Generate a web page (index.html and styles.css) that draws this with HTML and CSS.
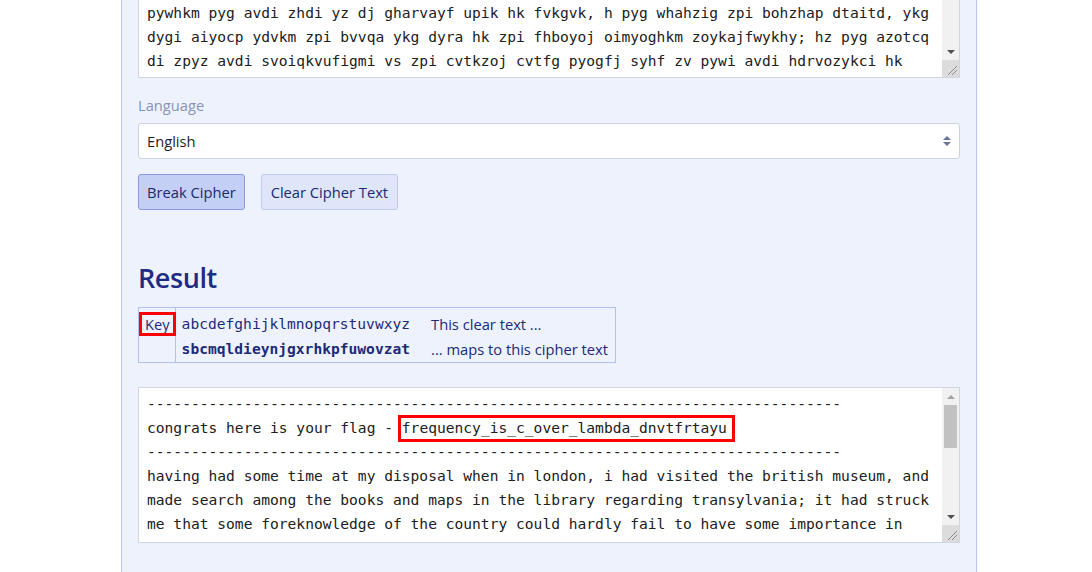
FILE: index.html
```html
<!DOCTYPE html>
<html lang="en">
<head>
<meta charset="utf-8">
<title>Substitution Cipher Solver</title>
<link rel="stylesheet" href="styles.css">
</head>
<body>
<main class="panel">
  <div class="field">
    <div class="textbox textbox-top">
      <div class="textbox-text">
        <div class="line">pywhkm pyg avdi zhdi yz dj gharvayf upik hk fvkgvk, h pyg whahzig zpi bohzhap dtaitd, ykg</div>
        <div class="line">dygi aiyocp ydvkm zpi bvvqa ykg dyra hk zpi fhboyoj oimyoghkm zoykajfwykhy; hz pyg azotcq</div>
        <div class="line">di zpyz avdi svoiqkvufigmi vs zpi cvtkzoj cvtfg pyogfj syhf zv pywi avdi hdrvozykci hk</div>
      </div>
      <div class="scrollbar">
        <div class="sb-btn"><svg width="8" height="4" viewBox="0 0 8 4"><path d="M0 4L4 0L8 4Z" class="arrow-off"/></svg></div>
        <div class="sb-track"><div class="sb-thumb sb-thumb-top"></div></div>
        <div class="sb-btn"><svg width="8" height="4" viewBox="0 0 8 4"><path d="M0 0H8L4 4Z" class="arrow-on"/></svg></div>
        <div class="sb-grip"><svg width="17" height="17" viewBox="0 0 17 17"><path d="M15 6L6 15M15 10L10 15" class="grip-line"/></svg></div>
      </div>
    </div>
  </div>

  <div class="field field-select">
    <label class="label">Language</label>
    <div class="select">
      <span>English</span>
      <svg width="8" height="10" viewBox="0 0 8 10"><path d="M4 0L8 4H0Z M0 6H8L4 10Z" class="select-arrow"/></svg>
    </div>
  </div>

  <div class="buttons">
    <button class="btn btn-primary">Break Cipher</button>
    <button class="btn btn-secondary">Clear Cipher Text</button>
  </div>

  <h2 class="result-title">Result</h2>

  <table class="key-table">
    <tr>
      <td class="key-cell"><span class="key-label">Key</span></td>
      <td class="mono-cell">abcdefghijklmnopqrstuvwxyz</td>
      <td class="desc-cell">This clear text ...</td>
    </tr>
    <tr>
      <td class="key-cell"></td>
      <td class="mono-cell mono-bold">sbcmqldieynjgxrhkpfuwovzat</td>
      <td class="desc-cell">... maps to this cipher text</td>
    </tr>
  </table>

  <div class="textbox textbox-result">
    <div class="textbox-text">
      <div class="line">-------------------------------------------------------------------------------</div>
      <div class="line">congrats here is your flag - <span class="flag">frequency_is_c_over_lambda_dnvtfrtayu</span></div>
      <div class="line">-------------------------------------------------------------------------------</div>
      <div class="line">having had some time at my disposal when in london, i had visited the british museum, and</div>
      <div class="line">made search among the books and maps in the library regarding transylvania; it had struck</div>
      <div class="line">me that some foreknowledge of the country could hardly fail to have some importance in</div>
    </div>
    <div class="scrollbar">
      <div class="sb-btn"><svg width="8" height="4" viewBox="0 0 8 4"><path d="M0 4L4 0L8 4Z" class="arrow-off"/></svg></div>
      <div class="sb-track"><div class="sb-thumb"></div></div>
      <div class="sb-btn"><svg width="8" height="4" viewBox="0 0 8 4"><path d="M0 0H8L4 4Z" class="arrow-on"/></svg></div>
      <div class="sb-grip"><svg width="17" height="17" viewBox="0 0 17 17"><path d="M15 6L6 15M15 10L10 15" class="grip-line"/></svg></div>
    </div>
  </div>
</main>
</body>
</html>
```

FILE: styles.css
```css
* {
  box-sizing: border-box;
}

html,
body {
  margin: 0;
  background: #ffffff;
}

body {
  font-family: "Open Sans", "Noto Sans", sans-serif;
  font-size: 14.7px;
  color: #1b1f2b;
  overflow: hidden;
}

.panel {
  width: 856px;
  margin: -116px 0 0 121px;
  padding: 16px 16px 29px;
  background: #eef2fd;
  border-left: 1px solid #b9c6f0;
  border-right: 1px solid #b9c6f0;
}

.field {
  margin-bottom: 15px;
}

.label {
  display: block;
  line-height: 24px;
  margin-bottom: 6px;
  color: #8a93b6;
}

.textbox {
  display: flex;
  background: #ffffff;
  border: 1px solid #cfd5e3;
}

.textbox-top {
  height: 178px;
}

.textbox-top .textbox-text {
  display: flex;
  flex-direction: column;
  justify-content: flex-end;
}

.textbox-result {
  height: 156px;
}

.textbox-text {
  flex: 1;
  min-width: 0;
  padding: 4px 8px;
  font-family: "DejaVu Sans Mono", monospace;
  font-size: 14.6px;
  line-height: 24px;
  color: #202020;
  overflow: hidden;
}

.line {
  white-space: pre;
  height: 24px;
  flex: none;
}

.scrollbar {
  width: 17px;
  flex: none;
  display: flex;
  flex-direction: column;
  background: #f1f1f1;
}

.sb-btn {
  height: 17px;
  flex: none;
  display: flex;
  align-items: center;
  justify-content: center;
}

.sb-track {
  flex: 1;
}

.sb-thumb {
  margin: 0 2px;
  height: 43px;
  background: #c1c1c1;
}

.sb-thumb-top {
  height: 40px;
}

.sb-grip {
  height: 17px;
  flex: none;
  background: #dcdcdc;
}

.sb-grip svg {
  display: block;
}

.arrow-on {
  fill: #505050;
}

.arrow-off {
  fill: #a3a3a3;
}

.grip-line {
  stroke: #8a8a8a;
  stroke-width: 1;
  fill: none;
}

.select {
  display: flex;
  align-items: center;
  justify-content: space-between;
  height: 36px;
  padding: 0 8px 0 8px;
  background: #ffffff;
  border: 1px solid #ccd2e0;
  border-radius: 3px;
  color: #1b1f2b;
}

.select-arrow {
  fill: #6b7394;
}

.buttons {
  display: flex;
  gap: 16px;
  margin-bottom: 51px;
}

.btn {
  height: 36px;
  padding: 0 8px;
  border-radius: 3px;
  font: inherit;
  color: #1b2a6e;
  cursor: pointer;
}

.btn-primary {
  background: #c3cff4;
  border: 1px solid #8c9bd6;
}

.btn-secondary {
  padding: 0 9px;
  background: #dfe6fa;
  border: 1px solid #c0ccf1;
}

.result-title {
  margin: 0 0 12px;
  font-size: 27px;
  line-height: 34px;
  font-weight: 600;
  letter-spacing: -0.4px;
  color: #1e2b84;
}

.key-table {
  border-collapse: separate;
  border-spacing: 0;
  border: 1px solid #b4c1ef;
  margin-bottom: 24px;
  color: #1c2a78;
}

.key-table td {
  padding: 0 6px;
  line-height: 24px;
  vertical-align: top;
}

.key-table tr:first-child td {
  padding-top: 4px;
}

.key-table tr:last-child td {
  padding-top: 1px;
  padding-bottom: 1px;
}

.key-table td.key-cell {
  padding-left: 0;
  padding-right: 0;
  border-right: 1px solid #b4c1ef;
}

.key-label {
  display: block;
  position: relative;
  padding: 0 5px 0 6px;
}

.key-label::after {
  content: "";
  position: absolute;
  top: 0;
  bottom: 0;
  left: 0;
  right: -1px;
  border: 3px solid #ff0000;
}

.key-table td.mono-cell {
  font-family: "DejaVu Sans Mono", monospace;
  font-size: 14.6px;
  padding-right: 15px;
}

.key-table td.desc-cell {
  padding-right: 7px;
}

.mono-bold {
  font-weight: bold;
}

.flag {
  position: relative;
}

.flag::after {
  content: "";
  position: absolute;
  top: -4px;
  bottom: -6px;
  left: -4px;
  right: -8px;
  border: 3px solid #ff0000;
}
```
